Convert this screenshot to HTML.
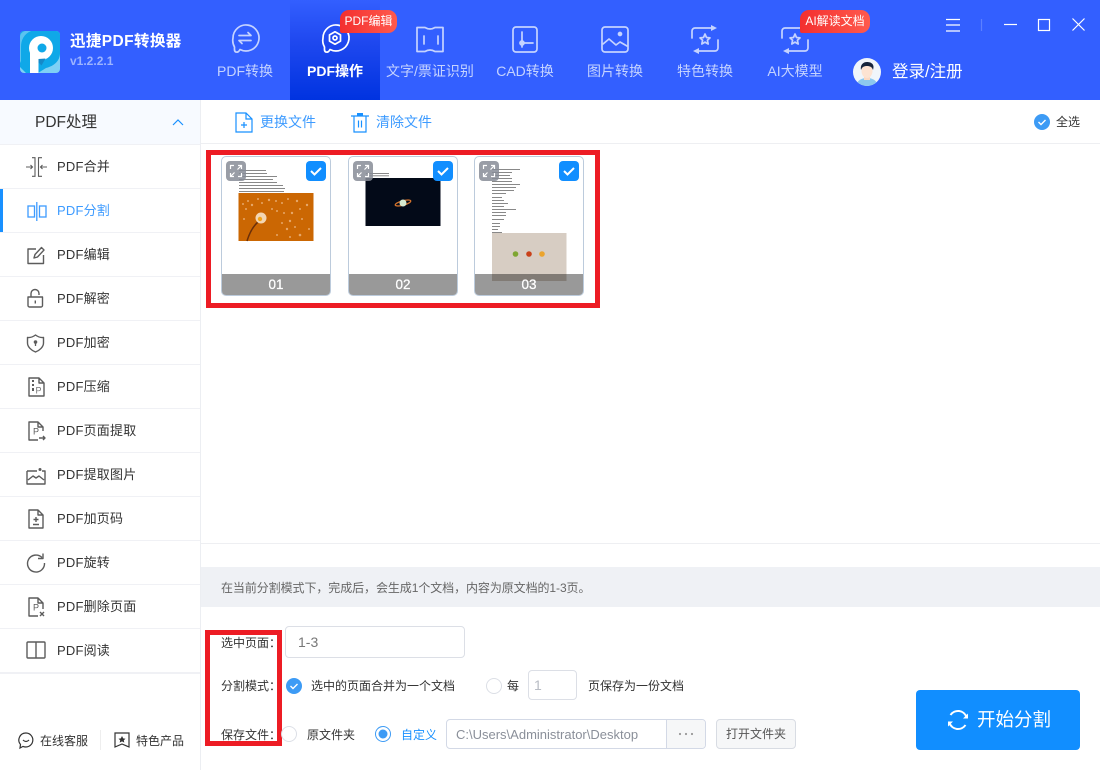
<!DOCTYPE html>
<html lang="zh"><head><meta charset="utf-8"><title>迅捷PDF转换器</title>
<style>
*{box-sizing:border-box;margin:0;padding:0}
html,body{width:1100px;height:770px;overflow:hidden;background:#fff;font-family:"Liberation Sans","Noto Sans CJK SC",sans-serif;color:#333}
.a{position:absolute}
.t{position:absolute;white-space:nowrap;line-height:20px}
svg{position:absolute;overflow:visible}
.tab{position:absolute;top:61px;width:100px;text-align:center;font-size:14px;line-height:20px;color:#c5d3ff;white-space:nowrap}
.ic{fill:none;stroke:#c5d3ff;stroke-width:1.700;stroke-linecap:round;stroke-linejoin:round}
.m{fill:none;stroke:#5c5c5c;stroke-width:1.400;stroke-linejoin:round}
.line{position:absolute;left:0;width:200px;height:1px;background:#f0f1f5}
.mi{position:absolute;left:57px;font-size:13px;line-height:20px;color:#333;white-space:nowrap;letter-spacing:.2px}
.card{position:absolute;top:156px;width:110px;height:140px;border:1px solid #bccbdc;border-radius:5px;background:#fff;overflow:hidden}
.foot{position:absolute;left:0;right:0;bottom:0;height:21px;background:rgba(0,0,0,.4);color:#fff;font-size:13.500px;line-height:21px;text-align:center;-webkit-text-stroke:.25px #fff}
.exp{position:absolute;top:4px;left:4px;width:20px;height:20px;border-radius:4px;background:rgba(135,140,150,.85)}
.chk{position:absolute;top:4px;right:4px;width:20px;height:20px;border-radius:4px;background:#118eff}
.lab{font-size:12px;color:#333}
</style></head><body>

<div class="a" style="left:0;top:0;width:1100px;height:100px;background:#335fff"></div>
<div class="a" style="left:290px;top:0;width:90px;height:100px;background:linear-gradient(#335fff 0%,#2049f0 40%,#0033e0 100%)"></div>

<svg style="left:20px;top:31px" width="40" height="42" viewBox="0 0 40 42">
<rect width="40" height="42" rx="4" fill="#7fd0f5"/>
<path d="M0 4a4 4 0 0 1 4-4h32a4 4 0 0 1 4 4v18c0 8-6 13-14 15l-8 5H6l-6-6z" fill="#0fa8e8"/>
<path d="M0 30V6C0 3 2 1 5 0h6C4 3 1 9 1 16v16z" fill="#5cc3f0"/>
<circle cx="21" cy="17" r="12" fill="#fff"/>
<path d="M10 16h8.500v26H10z" fill="#fff"/>
<circle cx="22" cy="17" r="4.500" fill="#0fa8e8"/>
<path d="M18.500 28l7-.5-4 7-3-3z" fill="#1689c8"/>
</svg>
<div class="t" style="left:70px;top:32px;font-size:15.500px;font-weight:bold;color:#fff;letter-spacing:.4px">迅捷PDF转换器</div>
<div class="t" style="left:70px;top:51px;font-size:12px;font-weight:bold;color:#9db4ff">v1.2.2.1</div>

<svg style="left:231px;top:24px" width="28" height="30" viewBox="0 0 28 30"><g class="ic"><path d="M2 14a13 13 0 1 1 7 11.500c-1 2-2.500 3-4 2.500-2-.5-1.500-3-1.500-5A13 13 0 0 1 2 14z"/><path d="M8 11.500h12l-3-3M20 16.500H8l3 3"/></g></svg>
<svg style="left:321px;top:24px" width="28" height="30" viewBox="0 0 28 30"><g class="ic" style="stroke:#fff"><path d="M2 14a13 13 0 1 1 7 11.500c-1 2-2.500 3-4 2.500-2-.5-1.500-3-1.500-5A13 13 0 0 1 2 14z"/><path d="M14 7.800l5.500 3.100v6.200L14 20.200l-5.500-3.100v-6.200z"/><circle cx="14" cy="14" r="2"/></g></svg>
<svg style="left:416px;top:26px" width="28" height="26" viewBox="0 0 28 26"><g class="ic"><path d="M1 1.500h8q5 3 10 0h8v24h-8q-5-3-10 0H1z"/><path d="M8 10v8M22 10v8"/></g></svg>
<svg style="left:512px;top:26px" width="26" height="26" viewBox="0 0 26 26"><g class="ic"><rect x="1" y="1" width="24" height="25" rx="3"/><path d="M10 6v15M10 17h11"/><circle cx="10" cy="17" r="2" fill="#c5d3ff"/></g></svg>
<svg style="left:601px;top:26px" width="28" height="26" viewBox="0 0 28 26"><g class="ic"><rect x="1" y="1" width="26" height="25" rx="3"/><path d="M2 18l6-5 7 6 4-3 7 4"/><circle cx="19" cy="8" r="1.500" fill="#c5d3ff"/></g></svg>
<svg style="left:691px;top:25px" width="28" height="30" viewBox="0 0 28 30"><g class="ic"><path d="M1 13V6a3 3 0 0 1 3-3h17M27 15v8a3 3 0 0 1-3 3H7"/><path d="M14 9l1.500 3.500 3.500.4-2.600 2.400.8 3.700-3.200-1.900-3.200 1.900.8-3.700L9 12.900l3.500-.4z"/></g><path d="M20 0l6 3-6 3zM8 23l-6 3 6 3z" fill="#c5d3ff"/></svg>
<svg style="left:781px;top:25px" width="28" height="30" viewBox="0 0 28 30"><g class="ic"><path d="M1 13V6a3 3 0 0 1 3-3h17M27 15v8a3 3 0 0 1-3 3H7"/><path d="M14 9l1.500 3.500 3.500.4-2.600 2.400.8 3.700-3.200-1.900-3.200 1.900.8-3.700L9 12.900l3.500-.4z"/></g><path d="M8 23l-6 3 6 3z" fill="#c5d3ff"/></svg>

<div class="tab" style="left:195px">PDF转换</div>
<div class="tab" style="left:285px;color:#fff;font-weight:bold">PDF操作</div>
<div class="tab" style="left:380px">文字/票证识别</div>
<div class="tab" style="left:475px">CAD转换</div>
<div class="tab" style="left:565px">图片转换</div>
<div class="tab" style="left:655px">特色转换</div>
<div class="tab" style="left:745px">AI大模型</div>

<div class="a" style="left:340px;top:10px;width:57px;height:23px;border-radius:9px 9px 9px 2px;background:linear-gradient(90deg,#f32f2f,#ff5a4d);color:#fff;font-size:12px;line-height:22px;text-align:center;white-space:nowrap">PDF编辑</div>
<div class="a" style="left:800px;top:10px;width:70px;height:23px;border-radius:9px 9px 9px 2px;background:linear-gradient(90deg,#f32f2f,#ff5a4d);color:#fff;font-size:12px;line-height:22px;text-align:center;white-space:nowrap">AI解读文档</div>

<svg style="left:853px;top:58px" width="28" height="28" viewBox="0 0 28 28">
<clipPath id="av"><circle cx="14" cy="14" r="14"/></clipPath>
<g clip-path="url(#av)"><rect width="28" height="28" fill="#f0f5fb"/>
<path d="M3 28c1-6 6-8 11-8s10 2 11 8z" fill="#8cc8ee"/>
<rect x="11" y="17" width="6" height="5" fill="#fbd9c4"/>
<ellipse cx="14" cy="13" rx="5.500" ry="7" fill="#fde3d2"/>
<path d="M8 12c-1-5 2-8 6-8s8 2 6 8c-1-3-3-4-6-4s-5 1-6 4z" fill="#16243c"/></g></svg>
<div class="t" style="left:892px;top:62px;font-size:16.500px;color:#fff">登录/注册</div>

<svg style="left:940px;top:14px" width="150" height="22" viewBox="0 0 150 22"><g fill="none" stroke="#fff" stroke-width="1.200">
<path d="M6 5.500h14M6 11h14M6 17h14"/><path d="M41.500 5v12" stroke="#5c80ff"/>
<path d="M64 10.500h13"/><rect x="98.500" y="5.500" width="11" height="11"/><path d="M132.500 4.500l12 12M144.500 4.500l-12 12"/></g></svg>

<div class="a" style="left:0;top:100px;width:200px;height:44px;background:#f7faff"></div>
<div class="a" style="left:200px;top:100px;width:1px;height:670px;background:#eceef2"></div>
<div class="t" style="left:35px;top:113px;font-size:15.500px;color:#333">PDF处理</div>
<svg style="left:171px;top:118px" width="14" height="9" viewBox="0 0 14 9"><path d="M2 7l5-5 5 5" fill="none" stroke="#1890ff" stroke-width="1.200"/></svg>

<div class="line" style="top:144px"></div><div class="line" style="top:188px"></div><div class="line" style="top:232px"></div><div class="line" style="top:276px"></div><div class="line" style="top:320px"></div><div class="line" style="top:364px"></div><div class="line" style="top:408px"></div><div class="line" style="top:452px"></div><div class="line" style="top:496px"></div><div class="line" style="top:540px"></div><div class="line" style="top:584px"></div><div class="line" style="top:628px"></div><div class="line" style="top:672px;height:2px"></div>
<div class="a" style="left:0;top:189px;width:3px;height:43px;background:#1890ff"></div>

<div class="mi" style="top:157px">PDF合并</div>
<div class="mi" style="top:201px;color:#3d9bff">PDF分割</div>
<div class="mi" style="top:245px">PDF编辑</div>
<div class="mi" style="top:289px">PDF解密</div>
<div class="mi" style="top:333px">PDF加密</div>
<div class="mi" style="top:377px">PDF压缩</div>
<div class="mi" style="top:421px">PDF页面提取</div>
<div class="mi" style="top:465px">PDF提取图片</div>
<div class="mi" style="top:509px">PDF加页码</div>
<div class="mi" style="top:553px">PDF旋转</div>
<div class="mi" style="top:597px">PDF删除页面</div>
<div class="mi" style="top:641px">PDF阅读</div>

<svg style="left:26px;top:157px" width="22" height="20" viewBox="0 0 22 20"><path d="M0 10h6.500M4.500 8L6.500 10l-2 2M21 10h-6.500M16.500 8L14.500 10l2 2M6 .7h3v18.600H6M16 .7h-3.500v18.600H16" fill="none" stroke="#5c5c5c" stroke-width="1.100"/></svg>
<svg style="left:27px;top:201px" width="20" height="21" viewBox="0 0 20 21"><g fill="none" stroke="#3d9bff" stroke-width="1.300"><rect x="1" y="5" width="6.500" height="11"/><rect x="12.500" y="5" width="6.500" height="11"/><path d="M9.800 1v19"/></g></svg>
<svg style="left:27px;top:245px" width="18" height="20" viewBox="0 0 18 20"><path class="m" d="M9 4H1v14.500h15.500V10M7 13l1-3.500L14.500 2.500l2.500 2.500-6.500 7z"/></svg>
<svg style="left:27px;top:289px" width="17" height="19" viewBox="0 0 17 19"><path class="m" d="M1 8h14.500v8.500a1.500 1.500 0 0 1-1.500 1.500H2.500A1.500 1.500 0 0 1 1 16.500zM4 8V4.500a4 4 0 0 1 8 0V6M8.300 11.500v3"/></svg>
<svg style="left:26px;top:334px" width="19" height="19" viewBox="0 0 19 19"><path class="m" d="M1.500 3.500q4 .5 8-2.500q4 3 8 2.500v5.500c0 4-4 7.500-8 9c-4-1.500-8-5-8-9z"/><circle cx="9.500" cy="8" r="1.800" fill="#5c5c5c"/><path d="M9.500 8v4" stroke="#5c5c5c" stroke-width="1.300"/></svg>
<svg style="left:27px;top:377px" width="18" height="20" viewBox="0 0 18 20"><path class="m" d="M2 1h10l5 5v13H2zM12 1v5h5"/><path d="M5 3h2v2H5zM5 7h2v2H5zM5 11h2v3H5z" fill="#5c5c5c"/><text x="8.500" y="16.500" font-size="9" fill="#777" font-family="Liberation Sans">P</text></svg>
<svg style="left:27px;top:421px" width="19" height="20" viewBox="0 0 19 20"><path class="m" d="M16 10V6l-5-5H2v18h9M11 1v5h5"/><text x="6" y="13.500" font-size="9" fill="#5c5c5c" font-family="Liberation Sans">P</text><path class="m" d="M12 17h6M16 15l2 2-2 2"/></svg>
<svg style="left:26px;top:467px" width="20" height="18" viewBox="0 0 20 18"><path class="m" d="M1 4h10M16 4h3v13H1V4M2 13l5-4 3 2 3-2 5 4"/><circle cx="14" cy="2.500" r="1.500" fill="#5c5c5c"/></svg>
<svg style="left:27px;top:509px" width="18" height="20" viewBox="0 0 18 20"><path class="m" d="M2 1h9l5 5v13H2zM11 1v5h5"/><path class="m" d="M9 8v5M6.500 10.500h5M6 15.500h6"/></svg>
<svg style="left:26px;top:553px" width="20" height="20" viewBox="0 0 20 20"><path class="m" d="M16 4.500A8.500 8.500 0 1 0 18.500 10M17 .5v5h-5"/></svg>
<svg style="left:27px;top:597px" width="19" height="20" viewBox="0 0 19 20"><path class="m" d="M16 12V6l-5-5H2v18h9M11 1v5h5"/><text x="6" y="13.500" font-size="9" fill="#5c5c5c" font-family="Liberation Sans">P</text><path class="m" d="M13 15l4 4M17 15l-4 4"/></svg>
<svg style="left:26px;top:641px" width="20" height="18" viewBox="0 0 20 18"><path class="m" d="M2 1h16a1 1 0 0 1 1 1v14a1 1 0 0 1-1 1H2a1 1 0 0 1-1-1V2a1 1 0 0 1 1-1zM10 1v16"/></svg>

<svg style="left:18px;top:732px" width="16" height="17" viewBox="0 0 16 17"><path d="M8 1a7 7 0 1 1-3 13.400L2 16l.5-3.500A7 7 0 0 1 8 1zM5 8q3 3 6 0" fill="none" stroke="#333" stroke-width="1.200"/></svg>
<div class="t" style="left:40px;top:731px;font-size:12px">在线客服</div>
<div class="a" style="left:100px;top:730px;width:1px;height:20px;background:#eee"></div>
<svg style="left:114px;top:732px" width="16" height="16" viewBox="0 0 16 16"><path d="M1 1h14v14l-7-3-7 3z" fill="none" stroke="#333" stroke-width="1.200"/><path d="M8 4l1.200 2.400 2.300.3-1.700 1.600.5 2.300L8 9.400l-2.300 1.200.5-2.300L4.500 6.700l2.300-.3z" fill="#333"/></svg>
<div class="t" style="left:136px;top:731px;font-size:12px">特色产品</div>

<svg style="left:235px;top:112px" width="18" height="21" viewBox="0 0 18 21"><g fill="none" stroke="#1890ff" stroke-width="1.200"><path d="M1 1h10l6 6v13H1zM11 1v6h6M9 10v6M6 13h6"/></g></svg>
<div class="t" style="left:260px;top:112px;font-size:14px;color:#3d9bff">更换文件</div>
<svg style="left:351px;top:112px" width="18" height="21" viewBox="0 0 18 21"><g fill="none" stroke="#1890ff" stroke-width="1.200"><path d="M0 4h18M3 4v16h12V4M7.500 8.500v7M10.500 8.500v7"/></g><rect x="6" y="1" width="6" height="3" fill="#1890ff"/></svg>
<div class="t" style="left:376px;top:112px;font-size:14px;color:#3d9bff">清除文件</div>
<svg style="left:1034px;top:114px" width="16" height="16" viewBox="0 0 16 16"><circle cx="8" cy="8" r="8" fill="#3d9bf5"/><path d="M4.500 8l2.500 2.500 4.500-4.500" fill="none" stroke="#fff" stroke-width="1.400"/></svg>
<div class="t" style="left:1056px;top:112px;font-size:12px">全选</div>
<div class="a" style="left:201px;top:143px;width:899px;height:1px;background:#eeeff2"></div>

<div class="a" style="left:206px;top:150px;width:394px;height:158px;border:5px solid #ed1c24"></div>

<div class="card" style="left:221px">
<svg style="left:0;top:0" width="108" height="118" viewBox="0 0 108 118">
<g fill="#555"><rect x="17" y="13" width="27" height=".7"/><rect x="17" y="16" width="28" height=".7"/><rect x="17" y="19" width="38" height=".7"/><rect x="17" y="22" width="34" height=".7"/><rect x="17" y="25" width="38" height=".7"/><rect x="17" y="28" width="44" height=".7"/><rect x="17" y="31" width="46" height=".7"/><rect x="17" y="34" width="45" height=".7"/></g>
<rect x="16.500" y="36" width="75" height="48" fill="#cb6703"/>
<g fill="#e6a769"><circle cx="21" cy="47" r="1"/><circle cx="26" cy="44" r="1"/><circle cx="30" cy="48" r="1.200"/><circle cx="36" cy="42" r="1"/><circle cx="40" cy="46" r="1"/><circle cx="47" cy="43" r="1.200"/><circle cx="54" cy="44" r="1"/><circle cx="60" cy="46" r="1"/><circle cx="66" cy="42" r="1"/><circle cx="75" cy="44" r="1.200"/><circle cx="85" cy="48" r="1.200"/><circle cx="55" cy="54" r="1"/><circle cx="62" cy="56" r="1"/><circle cx="70" cy="56" r="1.200"/><circle cx="78" cy="52" r="1"/><circle cx="80" cy="62" r="1"/><circle cx="60" cy="66" r="1"/><circle cx="68" cy="64" r="1.200"/><circle cx="65" cy="72" r="1.200"/><circle cx="73" cy="70" r="1"/><circle cx="78" cy="78" r="1.300"/><circle cx="55" cy="78" r="1"/><circle cx="68" cy="80" r="1"/><circle cx="24" cy="52" r="1"/><circle cx="50" cy="52" r="1"/><circle cx="22" cy="62" r="1"/><circle cx="87" cy="72" r="1"/></g>
<path d="M25 84q4-13 11-19" stroke="#6a2f0a" stroke-width="1.500" fill="none"/>
<circle cx="39" cy="61" r="5.500" fill="#f3d6b3"/><circle cx="38" cy="62" r="2.200" fill="#f2a51c"/>
</svg>
<div class="exp"><svg style="left:0;top:0" width="20" height="20" viewBox="0 0 20 20"><path d="M4.500 8V4.500H8M12 4.500h3.500V8M4.500 12v3.500H8M15.500 12v3.500H12M15 5l-3.500 3.500M5 15l3.500-3.500" fill="none" stroke="#fff" stroke-width="1.200"/></svg></div>
<div class="chk"><svg style="left:0;top:0" width="20" height="20" viewBox="0 0 20 20"><path d="M5 10l3.500 3.500L15 7" fill="none" stroke="#fff" stroke-width="2"/></svg></div>
<div class="foot">01</div></div>

<div class="card" style="left:348px">
<svg style="left:0;top:0" width="108" height="118" viewBox="0 0 108 118">
<g fill="#555"><rect x="17" y="16" width="23" height=".7"/><rect x="17" y="18.500" width="23" height=".7"/></g>
<rect x="16.500" y="21" width="75" height="48" fill="#030a18"/>
<ellipse cx="54" cy="46" rx="8" ry="2.200" fill="none" stroke="#d7742c" stroke-width="1.300" transform="rotate(-15 54 46)"/><circle cx="54" cy="46" r="3.500" fill="#d6ead0"/>
</svg>
<div class="exp"><svg style="left:0;top:0" width="20" height="20" viewBox="0 0 20 20"><path d="M4.500 8V4.500H8M12 4.500h3.500V8M4.500 12v3.500H8M15.500 12v3.500H12M15 5l-3.500 3.500M5 15l3.500-3.500" fill="none" stroke="#fff" stroke-width="1.200"/></svg></div>
<div class="chk"><svg style="left:0;top:0" width="20" height="20" viewBox="0 0 20 20"><path d="M5 10l3.500 3.500L15 7" fill="none" stroke="#fff" stroke-width="2"/></svg></div>
<div class="foot">02</div></div>

<div class="card" style="left:474px">
<svg style="left:0;top:0" width="108" height="138" viewBox="0 0 108 138">
<g fill="#555"><rect x="17" y="12" width="28" height=".7"/><rect x="17" y="15" width="20" height=".7"/><rect x="17" y="18" width="18" height=".7"/><rect x="17" y="21" width="20" height=".7"/><rect x="17" y="24" width="20" height=".7"/><rect x="17" y="27" width="28" height=".7"/><rect x="17" y="30" width="24" height=".7"/><rect x="17" y="33" width="22" height=".7"/><rect x="17" y="36" width="14" height=".7"/><rect x="17" y="40" width="10" height=".7"/><rect x="17" y="43" width="12" height=".7"/><rect x="17" y="46" width="16" height=".7"/><rect x="17" y="49" width="12" height=".7"/><rect x="17" y="52" width="24" height=".7"/><rect x="17" y="55" width="14" height=".7"/><rect x="17" y="58" width="14" height=".7"/><rect x="17" y="62" width="12" height=".7"/><rect x="17" y="66" width="8" height=".7"/><rect x="17" y="69" width="8" height=".7"/><rect x="17" y="72" width="6" height=".7"/><rect x="17" y="75" width="10" height=".7"/></g>
<rect x="17" y="76" width="74.500" height="48" fill="#d7cdc3"/>
<circle cx="40.500" cy="97" r="2.800" fill="#7fa632"/><circle cx="54" cy="97" r="2.800" fill="#c9411a"/><circle cx="67" cy="97" r="2.800" fill="#eba42d"/>
</svg>
<div class="exp"><svg style="left:0;top:0" width="20" height="20" viewBox="0 0 20 20"><path d="M4.500 8V4.500H8M12 4.500h3.500V8M4.500 12v3.500H8M15.500 12v3.500H12M15 5l-3.500 3.500M5 15l3.500-3.500" fill="none" stroke="#fff" stroke-width="1.200"/></svg></div>
<div class="chk"><svg style="left:0;top:0" width="20" height="20" viewBox="0 0 20 20"><path d="M5 10l3.500 3.500L15 7" fill="none" stroke="#fff" stroke-width="2"/></svg></div>
<div class="foot">03</div></div>

<div class="a" style="left:201px;top:543px;width:899px;height:1px;background:#eeeff2"></div>
<div class="a" style="left:201px;top:567px;width:899px;height:40px;background:#eff1f5"></div>
<div class="t" style="left:221px;top:578px;font-size:12px;color:#666;letter-spacing:-.08px">在当前分割模式下，完成后，会生成1个文档，内容为原文档的1-3页。</div>

<div class="a" style="left:205px;top:630px;width:77px;height:116px;border:5px solid #ed1c24"></div>
<div class="t lab" style="left:221px;top:633px">选中页面：</div>
<div class="t lab" style="left:221px;top:676px">分割模式：</div>
<div class="t lab" style="left:221px;top:725px">保存文件：</div>

<div class="a" style="left:285px;top:626px;width:180px;height:32px;border:1px solid #dcdfe6;border-radius:4px"></div>
<div class="t" style="left:298px;top:632px;font-size:14px;color:#777">1-3</div>

<svg style="left:286px;top:678px" width="16" height="16" viewBox="0 0 16 16"><circle cx="8" cy="8" r="8" fill="#3d9bf5"/><path d="M4.500 8l2.500 2.500 4.500-4.500" fill="none" stroke="#fff" stroke-width="1.400"/></svg>
<div class="t" style="left:311px;top:676px;font-size:12px;color:#333">选中的页面合并为一个文档</div>
<svg style="left:486px;top:678px" width="16" height="16" viewBox="0 0 16 16"><circle cx="8" cy="8" r="7.500" fill="#fff" stroke="#dcdfe6"/></svg>
<div class="t" style="left:507px;top:676px;font-size:12px">每</div>
<div class="a" style="left:528px;top:670px;width:49px;height:30px;border:1px solid #dcdfe6;border-radius:4px"></div>
<div class="t" style="left:534px;top:675px;font-size:14px;color:#b8bcc4">1</div>
<div class="t" style="left:588px;top:676px;font-size:12px">页保存为一份文档</div>

<svg style="left:281px;top:726px" width="16" height="16" viewBox="0 0 16 16"><circle cx="8" cy="8" r="7.500" fill="#fff" stroke="#dcdfe6"/></svg>
<div class="t" style="left:307px;top:725px;font-size:12px">原文件夹</div>
<svg style="left:375px;top:726px" width="16" height="16" viewBox="0 0 16 16"><circle cx="8" cy="8" r="7.500" fill="#fff" stroke="#3d9bf5"/><circle cx="8" cy="8" r="4.500" fill="#3d9bf5"/></svg>
<div class="t" style="left:401px;top:725px;font-size:12px;color:#1890ff">自定义</div>
<div class="a" style="left:446px;top:719px;width:260px;height:30px;border:1px solid #d3d9e6;border-radius:4px;overflow:hidden"><div class="a" style="left:219px;top:0;width:40px;height:28px;background:#f6f7f8;border-left:1px solid #d3d9e6"></div></div>
<div class="t" style="left:456px;top:725px;font-size:13px;color:#8a8f99">C:\Users\Administrator\Desktop</div>
<svg style="left:678px;top:732px" width="16" height="4" viewBox="0 0 16 4"><g fill="#999"><circle cx="2" cy="2" r="1.100"/><circle cx="8" cy="2" r="1.100"/><circle cx="14" cy="2" r="1.100"/></g></svg>
<div class="a" style="left:716px;top:719px;width:80px;height:30px;border:1px solid #d8dce3;border-radius:4px;background:#f6f7f8;text-align:center;font-size:12px;line-height:28px;color:#555">打开文件夹</div>

<div class="a" style="left:916px;top:690px;width:164px;height:60px;background:#118eff;border-radius:4px"></div>
<svg style="left:948px;top:710px" width="20" height="20" viewBox="0 0 20 20"><g fill="none" stroke="#fff" stroke-width="2"><path d="M2.500 5A9 9 0 0 1 18.500 7M17.500 15A9 9 0 0 1 1.500 13"/></g><path d="M20 3.500v5h-5zM0 16.500v-5h5z" fill="#fff"/></svg>
<div class="t" style="left:977px;top:710px;font-size:18.500px;color:#fff">开始分割</div>
</body></html>
